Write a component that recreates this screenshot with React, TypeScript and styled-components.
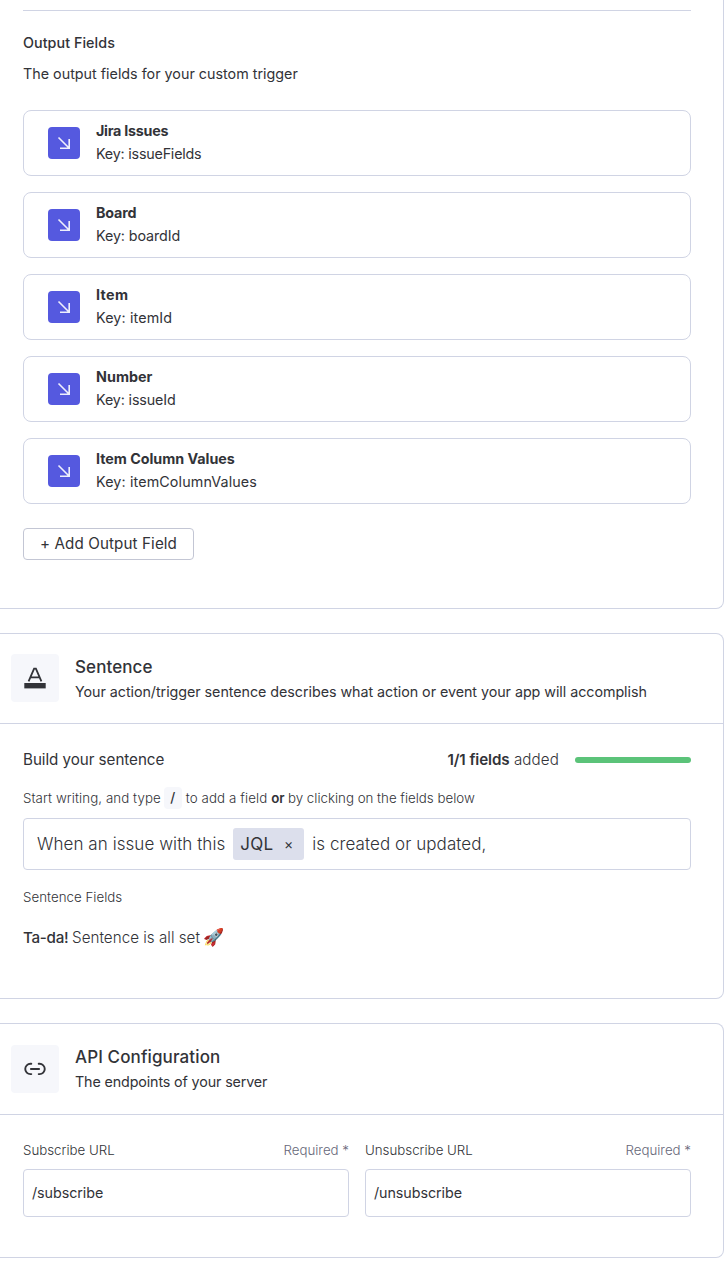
import React from "react";
import styled, { createGlobalStyle } from "styled-components";

const INK = "#323338";
const LINE = "#d0d4e4";

const GlobalStyle = createGlobalStyle`
  * { box-sizing: border-box; }
  body {
    margin: 0;
    background: #fff;
    color: ${INK};
    font-family: Inter, "Noto Color Emoji", sans-serif;
    overflow: hidden;
  }
`;

const Page = styled.main`
  display: flex;
  flex-direction: column;
  gap: 24px;
  width: 724px;
`;

const Panel = styled.section<{ $height: number; $open?: boolean }>`
  display: flex;
  flex-direction: column;
  height: ${(p) => p.$height}px;
  border: 1px solid ${LINE};
  border-left: 0;
  border-radius: 0 8px 8px 0;
  ${(p) => p.$open && "border-top: 0; border-top-right-radius: 0;"}
`;

const PanelBody = styled.div<{ $top: number }>`
  display: flex;
  flex-direction: column;
  padding: ${(p) => p.$top}px 32px 0 23px;
`;

const PanelHeader = styled.header<{ $height: number }>`
  display: flex;
  align-items: flex-start;
  gap: 16px;
  height: ${(p) => p.$height}px;
  padding: 20px 0 0 11px;
  border-bottom: 1px solid ${LINE};
`;

const HeaderIcon = styled.div<{ $drop?: number }>`
  display: flex;
  width: 48px;
  height: 48px;
  margin-top: ${(p) => p.$drop ?? 0}px;
  border-radius: 4px;
  background: #f6f7fb;
`;

const Text = styled.div<{ $size: number; $line: number; $weight?: number; $track?: number }>`
  font-size: ${(p) => p.$size}px;
  line-height: ${(p) => p.$line}px;
  font-weight: ${(p) => p.$weight ?? 400};
  letter-spacing: ${(p) => p.$track ?? 0}px;
  white-space: pre;
`;

const Description = styled(Text)`
  margin-top: 7px;
`;

const Divider = styled.hr`
  width: 100%;
  height: 1px;
  margin: 0 0 20px;
  border: 0;
  background: ${LINE};
`;

const FieldList = styled.ul`
  display: flex;
  flex-direction: column;
  gap: 16px;
  margin: 24px 0;
  padding: 0;
  list-style: none;
`;

const FieldCard = styled.li`
  display: flex;
  align-items: center;
  gap: 16px;
  height: 66px;
  padding: 0 24px;
  border: 1px solid ${LINE};
  border-radius: 8px;
`;

const FieldBadge = styled.div`
  display: flex;
  width: 32px;
  height: 32px;
  border-radius: 4px;
  background: #5559df;
`;

const FieldText = styled.div`
  padding-bottom: 2px;
`;

const AddButton = styled.button`
  width: 171px;
  height: 32px;
  padding: 0;
  border: 1px solid #c3c6d4;
  border-radius: 4px;
  background: #fff;
  color: ${INK};
  font: 400 15.2px/30px Inter, sans-serif;
  letter-spacing: 0.1px;
  white-space: nowrap;
`;

const Row = styled.div`
  display: flex;
  align-items: center;
`;

const SentenceHint = styled(Row)`
  margin-top: 15px;
`;

const FieldsLabel = styled(Text)`
  margin: 16px 0 18px;
`;

const Progress = styled.div`
  width: 116px;
  height: 6px;
  margin-left: 16px;
  border-radius: 3px;
  background: #5bc379;
`;

const Grow = styled.div`
  flex: 1;
`;

const KeyHint = styled.kbd`
  width: 18px;
  height: 22px;
  margin: 0 4px 0 3px;
  border-radius: 4px;
  background: #f6f7fb;
  font: 500 13.5px/21px Inter, sans-serif;
  text-align: center;
`;

const SentenceBox = styled.div`
  display: flex;
  align-items: center;
  height: 52px;
  margin-top: 9px;
  padding-left: 13px;
  border: 1px solid ${LINE};
  border-radius: 4px;
`;

const Chip = styled.span`
  display: flex;
  align-items: center;
  justify-content: space-between;
  width: 71px;
  height: 32px;
  margin: 0 8px;
  padding: 0 11px 0 7px;
  border-radius: 3px;
  background: #dcdfec;
`;

const Emoji = styled.span`
  margin-left: 3px;
  padding-bottom: 2px;
  font-size: 17px;
  line-height: 22px;
`;

const Columns = styled.div`
  display: grid;
  grid-template-columns: 1fr 1fr;
  gap: 16px;
`;

const LabelRow = styled.div`
  display: flex;
  justify-content: space-between;
  margin-bottom: 8px;
`;

const Required = styled(Text)`
  color: #676879;
`;

const UrlBox = styled.div`
  display: flex;
  align-items: center;
  height: 48px;
  padding: 0 8px;
  border: 1px solid ${LINE};
  border-radius: 4px;
`;

const fields = [
  { name: "Jira Issues", id: "issueFields", nameTrack: -0.26, keyTrack: -0.2 },
  { name: "Board", id: "boardId", nameTrack: -0.15, keyTrack: -0.1 },
  { name: "Item", id: "itemId", nameTrack: 0.4, keyTrack: 0.13 },
  { name: "Number", id: "issueId", nameTrack: 0.05, keyTrack: -0.14 },
  { name: "Item Column Values", id: "itemColumnValues", nameTrack: -0.02, keyTrack: 0.13 },
];

const urls = [
  { label: "Subscribe URL", value: "/subscribe" },
  { label: "Unsubscribe URL", value: "/unsubscribe" },
];

const ArrowIcon = () => (
  <svg width="32" height="32" viewBox="0 0 32 32" fill="none" stroke="#fff" strokeOpacity="0.9" strokeWidth="1.6">
    <path d="M10.5 10.5 21 21M21.2 12v9.2H12" />
  </svg>
);

const LetterIcon = () => (
  <svg width="48" height="48" viewBox="0 0 48 48" fill="none" stroke={INK} strokeWidth="1.8">
    <path d="M17.6 27.4 23.1 14.6h1.8l5.5 12.8M19.3 23.3h9.4" />
    <path d="M13.3 31.7h21.4" strokeWidth="5.4" />
  </svg>
);

const LinkIcon = () => (
  <svg width="48" height="48" viewBox="0 0 48 48" fill="none" stroke={INK} strokeWidth="1.9" strokeLinecap="round">
    <path d="M20.3 18.8h-.9a5.1 5.1 0 0 0 0 10.3h.9M27.7 18.8h.9a5.1 5.1 0 0 1 0 10.3h-.9M19.9 24h8.2" />
  </svg>
);

export default function App() {
  return (
    <>
      <GlobalStyle />
      <Page>
        <Panel $height={609} $open>
          <PanelBody $top={10}>
            <Divider />
            <Text $size={14.3} $line={24} $weight={500} $track={0.06}>Output Fields</Text>
            <Description $size={14.3} $line={24} $track={0.01}>
              The output fields for your custom trigger
            </Description>
            <FieldList>
              {fields.map((f) => (
                <FieldCard key={f.id}>
                  <FieldBadge><ArrowIcon /></FieldBadge>
                  <FieldText>
                    <Text $size={14.3} $line={23} $weight={700} $track={f.nameTrack}>{f.name}</Text>
                    <Text $size={14.3} $line={23} $track={f.keyTrack}>Key: {f.id}</Text>
                  </FieldText>
                </FieldCard>
              ))}
            </FieldList>
            <AddButton>+ Add Output Field</AddButton>
          </PanelBody>
        </Panel>

        <Panel $height={366}>
          <PanelHeader $height={90}>
            <HeaderIcon><LetterIcon /></HeaderIcon>
            <div>
              <Text $size={17} $line={26} $weight={500} $track={0.08}>Sentence</Text>
              <Text $size={14.3} $line={24} $track={-0.047}>
                Your action/trigger sentence describes what action or event your app will accomplish
              </Text>
            </div>
          </PanelHeader>
          <PanelBody $top={24}>
            <Row>
              <Text $size={15.2} $line={24} $track={-0.05}>Build your sentence</Text>
              <Grow />
              <Text $size={15.2} $line={24} $weight={600} $track={-0.1}>1/1 fields</Text>
              <Text $size={15.2} $line={24} $weight={300} $track={0.1}> added</Text>
              <Progress />
            </Row>
            <SentenceHint>
              <Text $size={13.3} $line={22} $weight={300} $track={0.08}>Start writing, and type</Text>
              <KeyHint>/</KeyHint>
              <Text $size={13.3} $line={22} $weight={300} $track={0.11}>to add a field </Text>
              <Text $size={13.3} $line={22} $weight={600} $track={-0.2}>or</Text>
              <Text $size={13.3} $line={22} $weight={300} $track={0}> by clicking on the fields below</Text>
            </SentenceHint>
            <SentenceBox>
              <Text $size={17} $line={24} $weight={300} $track={0.06}>When an issue with this</Text>
              <Chip>
                <Text $size={17} $line={24} $track={0.3}>JQL</Text>
                <Text $size={14} $line={24}>×</Text>
              </Chip>
              <Text $size={17} $line={24} $weight={300} $track={0.07}>is created or updated,</Text>
            </SentenceBox>
            <FieldsLabel $size={13.3} $line={22} $weight={300} $track={0.03}>Sentence Fields</FieldsLabel>
            <Row>
              <Text $size={15.2} $line={24} $weight={500} $track={-0.3}>Ta-da! </Text>
              <Text $size={15.2} $line={24} $weight={300} $track={0.02}>Sentence is all set</Text>
              <Emoji>🚀</Emoji>
            </Row>
          </PanelBody>
        </Panel>

        <Panel $height={235}>
          <PanelHeader $height={91}>
            <HeaderIcon $drop={1}><LinkIcon /></HeaderIcon>
            <div>
              <Text $size={17} $line={26} $weight={500} $track={0.12}>API Configuration</Text>
              <Text $size={14.3} $line={24} $track={-0.13}>The endpoints of your server</Text>
            </div>
          </PanelHeader>
          <PanelBody $top={24}>
            <Columns>
              {urls.map((u) => (
                <div key={u.label}>
                  <LabelRow>
                    <Text $size={13.3} $line={22} $weight={300}>{u.label}</Text>
                    <Required $size={13.3} $line={22} $weight={300}>Required *</Required>
                  </LabelRow>
                  <UrlBox>
                    <Text $size={14.3} $line={24} $track={-0.06}>{u.value}</Text>
                  </UrlBox>
                </div>
              ))}
            </Columns>
          </PanelBody>
        </Panel>
      </Page>
    </>
  );
}
